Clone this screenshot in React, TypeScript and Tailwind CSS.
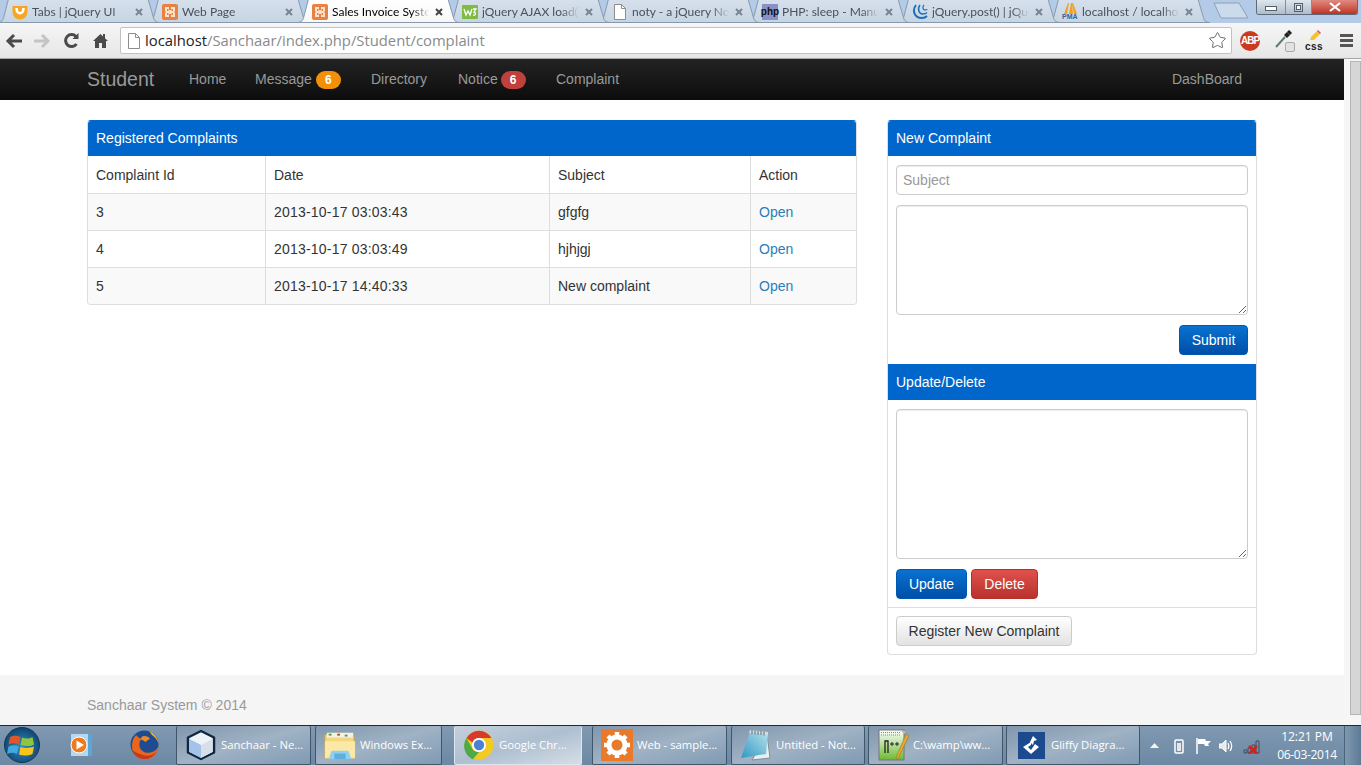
import React from "react";
import { Star } from "lucide-react";

const Xampp = () => (
  <svg width="16" height="16" viewBox="0 0 16 16">
    <rect width="16" height="16" rx="2" fill="#e98240" />
    <path d="M3 3h4v3h2V3h4v4l-1 1 1 1v4H9v-3H7v3H3V9l1-1-1-1z" fill="#fbe3cf" />
    <path d="M5 5h1.500v2H5zM9.500 5H11v2H9.500zM5 9h1.500v2H5zM9.500 9H11v2H9.500z" fill="#e98240" />
  </svg>
);
const Smile = () => (
  <svg width="16" height="16" viewBox="0 0 16 16">
    <path d="M.5 2h15v6a7.500 7.500 0 0 1-15 0z" fill="#f5a623" />
    <path d="M4.500 4c0 7 7 7 7 0" fill="none" stroke="#fff" strokeWidth="2.600" />
  </svg>
);
const W3 = () => (
  <svg width="16" height="14" viewBox="0 0 16 14">
    <rect width="16" height="14" rx="1" fill="#7dbb42" />
    <path d="M2 4l2 6 2-4 2 4 2-6M11 4h3l-2 3c2 0 2 4-1 3" fill="none" stroke="#fff" strokeWidth="1.300" />
  </svg>
);
const Doc = () => (
  <svg width="12" height="16" viewBox="0 0 12 16">
    <path d="M.5.5h7l4 4v11H.5z" fill="#fff" stroke="#8d8d8d" />
    <path d="M7.500.5v4h4" fill="none" stroke="#8d8d8d" />
  </svg>
);
const Php = () => (
  <span className="flex h-[16px] w-[16px] items-center justify-center bg-[#8990c4] text-[10px] leading-none font-bold text-[#111] font-['Liberation_Sans',sans-serif]">php</span>
);
const JQ = () => (
  <svg width="16" height="16" viewBox="0 0 16 16" fill="none" stroke="#1f6fb8">
    <path d="M4 1C0 6 2 14 10 14c2 0 4-1 5-2" strokeWidth="2" />
    <path d="M8 1C5 5 7 10 11 10c1.500 0 3-.5 4-1.500" strokeWidth="1.500" />
    <path d="M12 1c-2 2-1 5 1 5 1 0 2-.5 2-1" strokeWidth="1.200" />
  </svg>
);
const Pma = () => (
  <span className="relative block h-[17px] w-[16px]">
    <svg width="16" height="11" viewBox="0 0 16 11" className="absolute top-0 left-0">
      <path d="M2 11L6 0h1L5 11zM7 11l2-11h1l1 11zM12 11L10 0h1l4 11z" fill="#f2a01e" />
    </svg>
    <span className="absolute bottom-0 left-0 text-[7px] leading-none font-bold text-[#3a5e9a] font-['Liberation_Sans',sans-serif]">PMA</span>
  </span>
);

const tabs: { t: string; icon: React.ReactNode; active?: boolean; z: string }[] = [
  { t: "Tabs | jQuery UI", icon: <Smile />, z: "z-[8]" },
  { t: "Web Page", icon: <Xampp />, z: "z-[7]" },
  { t: "Sales Invoice System", icon: <Xampp />, active: true, z: "z-[9]" },
  { t: "jQuery AJAX load() Method", icon: <W3 />, z: "z-[6]" },
  { t: "noty - a jQuery Notification", icon: <Doc />, z: "z-[5]" },
  { t: "PHP: sleep - Manual", icon: <Php />, z: "z-[4]" },
  { t: "jQuery.post() | jQuery API", icon: <JQ />, z: "z-[3]" },
  { t: "localhost / localhost", icon: <Pma />, z: "z-[2]" },
];

function Tab({ t, icon, active, z }: { t: string; icon: React.ReactNode; active?: boolean; z: string }) {
  return (
    <div className={`relative -mr-[8px] flex h-[23px] w-[158px] shrink-0 items-center pl-[12px] ${z} ${active ? "text-black" : "text-[#4a5058]"}`}>
      <svg width="158" height="23" viewBox="0 0 158 23" className="absolute top-0 left-0 overflow-visible">
        <defs>
          <linearGradient id={active ? "tabA" : "tabI"} x1="0" y1="0" x2="0" y2="1">
            <stop offset="0" stopColor={active ? "#ffffff" : "#d6e0ec"} />
            <stop offset="1" stopColor={active ? "#f7f7f7" : "#c7d4e3"} />
          </linearGradient>
        </defs>
        <path
          d="M-3 22.500C2 22.500 3 20 4 16L8.500 -1H148L153 16C154 20 155 22.500 160 22.500Z"
          fill={`url(#${active ? "tabA" : "tabI"})`}
          stroke="#8698ad"
          strokeWidth="1"
        />
      </svg>
      <span className="relative flex w-[16px] shrink-0 justify-center">{icon}</span>
      <span className="relative ml-[4px] w-[97px] overflow-hidden text-[12px] leading-[20px] whitespace-nowrap font-['Lato',sans-serif] [mask-image:linear-gradient(to_right,black_82%,transparent)]">{t}</span>
      <svg width="8" height="8" viewBox="0 0 8 8" className="relative ml-[6px]" stroke={active ? "#444" : "#7a8490"} strokeWidth="2">
        <path d="M1 1l6 6M7 1L1 7" />
      </svg>
    </div>
  );
}

function Tabs() {
  return (
    <div className="flex h-[23px] items-start bg-[#b3cbe6]">
      {tabs.map((x) => (
        <Tab key={x.t} {...x} />
      ))}
      <svg width="36" height="17" viewBox="0 0 36 17" className="mt-[2px] ml-[13px]">
        <path d="M1 1H26L35 16H8Z" fill="#cbdbec" stroke="#8ea0b8" />
      </svg>
      <div className="mt-0 ml-auto mr-[3px] flex h-[15px] w-[102px] overflow-hidden rounded-b-[3px] border border-t-0 border-[#5c6b7c]">
        <div className="flex w-[28px] items-center justify-center bg-gradient-to-b from-[#dfe6ee] to-[#aebccb]">
          <span className="mt-[2px] h-[5px] w-[12px] border border-[#55606c] bg-white" />
        </div>
        <div className="flex w-[26px] items-center justify-center border-l border-[#7f8e9e] bg-gradient-to-b from-[#dfe6ee] to-[#aebccb]">
          <span className="relative h-[9px] w-[9px] border border-[#55606c]">
            <span className="absolute top-[1px] left-[1px] h-[5px] w-[5px] border border-[#55606c] bg-white" />
          </span>
        </div>
        <div className="flex flex-1 items-center justify-center border-l border-[#7f8e9e] bg-gradient-to-b from-[#df8a80] to-[#bd2f22]">
          <svg width="12" height="10" viewBox="0 0 12 10" stroke="#fff" strokeWidth="2.200">
            <path d="M1 1l10 8M11 1L1 9" />
          </svg>
        </div>
      </div>
    </div>
  );
}

function Toolbar() {
  return (
    <div className="flex h-[36px] items-center border-b border-[#a7a7a7] bg-gradient-to-b from-[#f6f6f6] to-[#e6e6e6]">
      <svg width="18" height="16" viewBox="0 0 18 16" className="ml-[5px]" fill="none" stroke="#4a4a4a" strokeWidth="3">
        <path d="M17 8H4M9 2L3 8l6 6" />
      </svg>
      <svg width="18" height="16" viewBox="0 0 18 16" className="ml-[10px]" fill="none" stroke="#c4c4c4" strokeWidth="3">
        <path d="M1 8h13M9 2l6 6-6 6" />
      </svg>
      <svg width="17" height="17" viewBox="0 0 17 17" className="ml-[12px]" fill="none" stroke="#4a4a4a" strokeWidth="3">
        <path d="M13.500 12A6 6 0 1 1 13 4.500" />
        <path d="M15.500 1v6h-6z" fill="#4a4a4a" stroke="none" />
      </svg>
      <svg width="15" height="15" viewBox="0 0 15 15" className="ml-[13px]" fill="#4a4a4a">
        <path d="M7.500 1L0 8h2v7h4v-5h3v5h4V8h2l-3-2.800V1h-2v2.400z" />
      </svg>
      <div className="ml-[12px] flex h-[27px] w-[1112px] items-center rounded-[2px] border border-[#c2c2c2] bg-white pr-[4px] pl-[7px]">
        <Doc />
        <span className="ml-[5px] text-[14.800px] leading-none text-[#8a8a8a]">
          <span className="text-[#222]">localhost</span>/Sanchaar/index.php/Student/complaint
        </span>
        <Star size={19} strokeWidth={1.200} className="ml-auto text-[#666]" />
      </div>
      <span className="ml-[8px] flex h-[20px] w-[20px] items-center justify-center rounded-full bg-[#c93a21] text-[10px] font-bold tracking-[-1px] text-white font-['Liberation_Sans',sans-serif]">ABP</span>
      <span className="relative ml-[15px] block h-[22px] w-[22px]">
        <svg width="20" height="18" viewBox="0 0 20 18" className="absolute top-0 left-0">
          <path d="M1 17L10 7" stroke="#5f7f6c" strokeWidth="2" />
          <path d="M9 5l3-3 3 3-3 3z" fill="#222" />
          <path d="M13 1l3 3" stroke="#222" strokeWidth="3" />
        </svg>
        <span className="absolute right-[2px] bottom-0 h-[10px] w-[10px] rounded-[2px] border border-[#aaa] bg-[#e2e2e2]" />
      </span>
      <span className="relative ml-[6px] block h-[22px] w-[22px] text-center">
        <svg width="12" height="11" viewBox="0 0 12 11" className="absolute top-0 left-[6px]">
          <path d="M1 10l1-3 6-6 3 3-6 6z" fill="#f2c230" />
          <path d="M8 1l1-1 3 3-1 1z" fill="#d9534f" />
        </svg>
        <span className="absolute bottom-0 left-0 w-full text-[10px] leading-[11px] font-bold tracking-[0.5px] text-[#222] font-['Liberation_Sans',sans-serif]">css</span>
      </span>
      <span className="ml-[15px] flex flex-col gap-[2px]">
        <span className="h-[3px] w-[13px] bg-[#555]" />
        <span className="h-[3px] w-[13px] bg-[#555]" />
        <span className="h-[3px] w-[13px] bg-[#555]" />
      </span>
    </div>
  );
}

function Badge({ n, c, m }: { n: number; c: string; m: string }) {
  return <span className={`flex h-[18px] w-[25px] items-center justify-center rounded-[10px] text-[12px] font-bold text-white ${m} ${c}`}>{n}</span>;
}

function Navbar() {
  return (
    <div className="h-[41px] shrink-0 bg-gradient-to-b from-[#232323] to-[#0d0d0d] text-[14px] text-[#999]">
      <div className="mx-auto flex h-full w-[1170px] items-center">
        <span className="w-[102px] text-[19.500px]">Student</span>
        <span className="w-[66px]">Home</span>
        <span className="flex w-[116px] items-center">Message<Badge n={6} c="bg-[#f39008]" m="ml-[4px]" /></span>
        <span className="w-[87px]">Directory</span>
        <span className="flex w-[98px] items-center">Notice<Badge n={6} c="bg-[#c0403c]" m="ml-[3px]" /></span>
        <span>Complaint</span>
        <span className="mr-[15px] ml-auto">DashBoard</span>
      </div>
    </div>
  );
}

const rows = [
  ["3", "2013-10-17 03:03:43", "gfgfg"],
  ["4", "2013-10-17 03:03:49", "hjhjgj"],
  ["5", "2013-10-17 14:40:33", "New complaint"],
];

function LeftPanel() {
  return (
    <div className="w-[770px] self-start overflow-hidden rounded-[4px] border border-[#dddddd] border-t-[#0066cc] bg-white">
      <div className="flex h-[35px] items-center bg-[#0066cc] px-[8px] text-white">Registered Complaints</div>
      <table className="w-full table-fixed">
        <colgroup>
          <col className="w-[177px]" />
          <col className="w-[284px]" />
          <col className="w-[201px]" />
          <col className="w-[106px]" />
        </colgroup>
        <tbody>
          <tr className="h-[37px]">
            {["Complaint Id", "Date", "Subject", "Action"].map((h, i) => (
              <td key={h} className={`pt-[2px] pr-[8px] ${i === 0 ? "pl-[8px]" : "pl-[8.500px]"} ${i < 3 ? "border-r border-[#dddddd]" : ""}`}>{h}</td>
            ))}
          </tr>
          {rows.map((r, k) => (
            <tr key={r[0]} className={`h-[37px] border-t border-[#dddddd] ${k % 2 === 0 ? "bg-[#f9f9f9]" : "bg-white"}`}>
              <td className="border-r border-[#dddddd] px-[8px] pt-[2px]">{r[0]}</td>
              <td className="border-r border-[#dddddd] pt-[2px] pr-[8px] pl-[8.500px] tracking-[0.2px]">{r[1]}</td>
              <td className="border-r border-[#dddddd] pt-[2px] pr-[8px] pl-[8.500px]">{r[2]}</td>
              <td className="pt-[2px] pr-[8px] pl-[8.500px] text-[#2a7eb8]">Open</td>
            </tr>
          ))}
        </tbody>
      </table>
    </div>
  );
}

const fieldCls = "block w-full rounded-[4px] border border-[#cccccc] bg-white px-[6px] text-[14px] shadow-[inset_0_1px_1px_rgba(0,0,0,0.075)] outline-none";
const btnCls = "flex h-[30px] items-center justify-center rounded-[4px] border text-[14px]";

function RightPanel() {
  return (
    <div className="w-[370px] self-start rounded-[4px] border border-[#dddddd] border-t-[#0066cc] bg-white">
      <div className="flex h-[35px] items-center rounded-t-[3px] bg-[#0066cc] px-[8px] text-white">New Complaint</div>
      <div className="flex flex-col gap-[10px] px-[8px] pt-[9px] pb-[9px]">
        <input placeholder="Subject" readOnly className={`${fieldCls} h-[30px] placeholder:text-[#999]`} />
        <textarea readOnly className={`${fieldCls} h-[110px]`} />
        <div className="flex justify-end">
          <span className={`${btnCls} w-[69px] border-[#0058b0] bg-gradient-to-b from-[#0a72d0] to-[#004fa8] text-white`}>Submit</span>
        </div>
      </div>
      <div className="flex h-[36px] items-center bg-[#0066cc] px-[8px] text-white">Update/Delete</div>
      <div className="flex flex-col gap-[10px] px-[8px] pt-[9px] pb-[8px]">
        <textarea readOnly className={`${fieldCls} h-[150px]`} />
        <div className="flex gap-[4px]">
          <span className={`${btnCls} w-[71px] border-[#0058b0] bg-gradient-to-b from-[#0a72d0] to-[#004fa8] text-white`}>Update</span>
          <span className={`${btnCls} w-[67px] border-[#b92c28] bg-gradient-to-b from-[#e0514c] to-[#b8322e] text-white`}>Delete</span>
        </div>
      </div>
      <div className="border-t border-[#dddddd] p-[8px]">
        <span className={`${btnCls} w-[176px] border-[#cccccc] bg-gradient-to-b from-white to-[#e2e2e2] text-[#333]`}>Register New Complaint</span>
      </div>
    </div>
  );
}

function Scrollbar() {
  return (
    <div className="flex w-[17px] shrink-0 flex-col bg-[#f6f6f6] pt-[2px] pb-[10px] pl-[6px]">
      <div className="flex-1 border border-[#b5b5b5] bg-[#d6d6d6]" />
    </div>
  );
}

/* taskbar icons */
const Orb = () => (
  <svg width="36" height="36" viewBox="0 0 36 36">
    <defs>
      <radialGradient id="orb" cx="0.5" cy="0.55" r="0.6">
        <stop offset="0" stopColor="#2f8fc4" />
        <stop offset="1" stopColor="#0d3d68" />
      </radialGradient>
    </defs>
    <circle cx="18" cy="18" r="17.500" fill="url(#orb)" stroke="#16384f" />
    <path d="M6 10c4-2 7-1.500 10.500 0L15 17.500C11.500 16 8.500 15.800 4.500 17.500z" fill="#e2552b" />
    <path d="M18 10.500c3.500 1.500 7 1.500 10.500-.5L30 17.500c-3.500 2-6.500 1.800-13.500 .5z" fill="#8dc63f" />
    <path d="M4.500 19.500c4-1.700 7-1.500 10.200 0L13 27c-3-1.500-6-1.700-10 0z" fill="#3fa9e0" />
    <path d="M16.500 20c4 1.200 8 1.500 13.500-.5L28.500 27c-5 2-9 2-13.500.5z" fill="#f9c41c" />
  </svg>
);
const MediaIcon = () => (
  <svg width="26" height="26" viewBox="0 0 26 26">
    <rect x="18" y="2" width="6" height="22" fill="#5ba6d8" />
    <rect x="3" y="2" width="17" height="22" fill="#b6d8ef" />
    <circle cx="11" cy="13" r="8" fill="#f07a1c" stroke="#fff" />
    <path d="M8.500 8.500l7.500 4.500-7.500 4.500z" fill="#fff" />
  </svg>
);
const Firefox = () => (
  <svg width="30" height="30" viewBox="0 0 30 30">
    <circle cx="15.500" cy="14.500" r="14" fill="#1f4c90" />
    <path d="M15 6c3 0 5 1 6 3-2 1-3 1-4 3-2 0-3-3-6-2 1-2 2-4 4-4z" fill="#f08a24" />
    <path d="M7 5C0 13 2 28 15 29.500 24 30 29 23 29.500 16c-2 6-11 9-16 5-4-3-4-9-1-12-2-1-4-2-5.500-4z" fill="#e9661c" />
    <path d="M20 1c5 2 9 7 9.500 13-1-4-3.500-7-6.500-9-1-1-2-3-3-4z" fill="#f9b233" />
    <path d="M3 20c2 6 8 9.500 14 9 5-.5 9-4 11-8-3 4-9 6-14 4-4-1-8-3-11-5z" fill="#c8391c" />
  </svg>
);
const CubeIcon = () => (
  <svg width="32" height="32" viewBox="0 0 32 32" strokeLinejoin="round">
    <path d="M16 2L29 8.500v15L16 30 3 23.500v-15z" fill="#eef3f8" stroke="#12263f" strokeWidth="2.500" />
    <path d="M4.500 10L16 16v13L4.500 23z" fill="#a4c3ea" />
    <path d="M27.500 10L16 16v13l11.500-6z" fill="#d7dfe8" />
  </svg>
);
const Folder = () => (
  <svg width="34" height="32" viewBox="0 0 34 32">
    <path d="M1 5h12l2 2h17v23H1z" fill="#f1d77f" stroke="#c9a94f" />
    <path d="M3 3h28v5H3z" fill="#f8f3d8" />
    <rect x="5" y="4" width="3" height="2" fill="#3fa04a" />
    <rect x="14" y="4" width="3" height="2" fill="#c7402e" />
    <rect x="22" y="5" width="3" height="2" fill="#3f8fc7" />
    <path d="M1 12h32v18H1z" fill="#fbe8a6" />
    <path d="M8 22h18l3 9H5z" fill="#8fd0f0" />
    <path d="M11 25h12v6H11z" fill="#5bb0e0" />
  </svg>
);
const Chrome = () => (
  <svg width="30" height="30" viewBox="0 0 30 30">
    <circle cx="15" cy="15" r="14.500" fill="#f3c924" />
    <path d="M2.500 8A14.500 14.500 0 0 1 27.500 8H15a7 7 0 0 0-6.500 4.500z" fill="#d9382c" />
    <path d="M2.500 8L9 20a7 7 0 0 0 6 2l-6 7.300A14.500 14.500 0 0 1 2.500 8z" fill="#4fa945" />
    <circle cx="15" cy="15" r="7" fill="#fff" />
    <circle cx="15" cy="15" r="5.200" fill="#4a80d6" />
  </svg>
);
const Gear = () => (
  <span className="flex h-[32px] w-[32px] items-center justify-center bg-[#e87a2a]">
    <svg width="28" height="28" viewBox="0 0 28 28">
      <circle cx="14" cy="14" r="8" fill="none" stroke="#fff" strokeWidth="5" />
      <path d="M14 1v26M1 14h26M5 5l18 18M23 5L5 23" stroke="#fff" strokeWidth="4.500" strokeDasharray="5 16" />
    </svg>
  </span>
);
const Notepad = () => (
  <svg width="32" height="32" viewBox="0 0 32 32">
    <defs>
      <linearGradient id="npd" x1="0" y1="1" x2="1" y2="0">
        <stop offset="0" stopColor="#2f97c6" />
        <stop offset="1" stopColor="#b8e2ea" />
      </linearGradient>
    </defs>
    <path d="M27 5l3 24-18 2 13-22z" fill="#e9eef0" stroke="#7f8d94" />
    <path d="M10 3l18 2-2 20-25 4z" fill="url(#npd)" />
    <path d="M10 1l18 2v3L9 4z" fill="#cfdde2" />
    <path d="M12 1v4M15 1.500v4M18 2v4M21 2v4M24 2.500v4" stroke="#5f6e75" strokeWidth="1" />
  </svg>
);
const Npp = () => (
  <svg width="32" height="32" viewBox="0 0 32 32">
    <defs>
      <linearGradient id="npg" x1="0" y1="0" x2="0" y2="1">
        <stop offset="0" stopColor="#ffffff" />
        <stop offset="1" stopColor="#6cb92e" />
      </linearGradient>
    </defs>
    <rect x="2" y="1" width="25" height="30" fill="url(#npg)" stroke="#777" />
    <path d="M4 3.500h19M4 6h19" stroke="#888" strokeDasharray="1 1" />
    <path d="M8 24V12h3v12" fill="none" stroke="#222" strokeWidth="1.300" />
    <path d="M13 15h4M15 13v4M18 15h4M20 13v4" stroke="#222" />
    <path d="M19 29L29 5l3 1.500-11 23.500z" fill="#e8a92f" stroke="#8a6a1f" strokeWidth=".5" />
    <path d="M24 2h5l-2 3z" fill="#bbb" />
  </svg>
);
const Gliffy = () => (
  <svg width="27" height="27" viewBox="0 0 27 27">
    <rect width="27" height="27" fill="#1c4a8f" />
    <path d="M13 10L5 15l8 7 8-7-4-3-4 6-3-3 3-2z" fill="#fff" />
    <path d="M12 10l3-6 4 4-3 1-1 4z" fill="#fff" />
  </svg>
);

const tasks: { t: string; w: string; icon: React.ReactNode; active?: boolean; after: string }[] = [
  { t: "Sanchaar - Ne...", w: "w-[135px]", icon: <CubeIcon />, after: "mr-[4px]" },
  { t: "Windows Ex...", w: "w-[127px]", icon: <Folder />, after: "mr-[12px]" },
  { t: "Google Chr...", w: "w-[128px]", icon: <Chrome />, active: true, after: "mr-[10px]" },
  { t: "Web - sample...", w: "w-[135px]", icon: <Gear />, after: "mr-[4px]" },
  { t: "Untitled - Not...", w: "w-[134px]", icon: <Notepad />, after: "mr-[3px]" },
  { t: "C:\\wamp\\ww...", w: "w-[135px]", icon: <Npp />, after: "mr-[3px]" },
  { t: "Gliffy Diagra...", w: "w-[134px]", icon: <Gliffy />, after: "" },
];

function Taskbar() {
  return (
    <div className="flex h-[40px] shrink-0 border-t border-[#1d2b38] bg-gradient-to-b from-[#8199b1] to-[#6c88a3] text-[11.300px] text-white">
      <span className="mt-[1px] ml-[4px] w-[36px]"><Orb /></span>
      <span className="mt-[6px] ml-[28px] w-[26px]"><MediaIcon /></span>
      <span className="mt-[4px] ml-[35px] w-[30px]"><Firefox /></span>
      <div className="ml-[17px] flex">
        {tasks.map((x) => (
          <div
            key={x.t}
            className={`flex h-full shrink-0 items-center gap-[4px] overflow-hidden rounded-[2px] border border-t-0 pl-[8px] whitespace-nowrap ${x.w} ${x.after} ${
              x.active
                ? "border-[#dfe6ee] bg-gradient-to-br from-[#c4cfdb] via-[#aebfd0] to-[#d5dee7]"
                : "border-[#42566a] bg-gradient-to-br from-[#8197ae] via-[#a0b2c4] to-[#7f9ab3]"
            }`}
          >
            <span className="flex w-[32px] shrink-0 justify-center">{x.icon}</span>
            <span>{x.t}</span>
          </div>
        ))}
      </div>
      <div className="flex flex-1 items-center">
        <svg width="9" height="5" viewBox="0 0 9 5" className="ml-[10px]"><path d="M0 5l4.500-5L9 5z" fill="#f2f2f2" /></svg>
        <svg width="10" height="16" viewBox="0 0 10 16" className="ml-[15px]" fill="none" stroke="#fff" strokeWidth="1.500"><rect x="1" y="2" width="8" height="13" rx="1" /><rect x="3" y="5" width="4" height="8" fill="#e6e6e6" stroke="none" /></svg>
        <svg width="16" height="16" viewBox="0 0 16 16" className="ml-[12px]"><path d="M1 0v16" stroke="#fff" strokeWidth="1.500" /><path d="M2 1h7l1 2h5l-3 3 1 2H9L8 6H2z" fill="#fff" /></svg>
        <svg width="15" height="14" viewBox="0 0 15 14" className="ml-[7px]" fill="none" stroke="#fff"><path d="M0 5h3l4-4v12L3 9H0z" fill="#e8e8e8" stroke="#fff" /><path d="M9 4c1 2 1 4 0 6M11 2c2 3 2 7 0 10" strokeWidth="1.300" /></svg>
        <svg width="17" height="16" viewBox="0 0 17 16" className="ml-[9px]"><path d="M1 12h3v3H1zM5 10h3v5H5zM9 7h3v8H9zM13 3h3v12h-3z" fill="none" stroke="#3f4e5c" /><path d="M6 8l8 8M14 8l-8 8" stroke="#d81f1f" strokeWidth="2.500" /></svg>
        <div className="mr-[0px] ml-auto flex w-[74px] flex-col items-center text-[12px] leading-[18px] whitespace-nowrap">
          <span>12:21 PM</span>
          <span className="tracking-[-0.3px]">06-03-2014</span>
        </div>
      </div>
      <div className="w-[17px] border-l border-[#4d6377] bg-gradient-to-r from-[#7f99b2] to-[#5d7a95]" />
    </div>
  );
}

export default function App() {
  return (
    <div className="flex h-[765px] w-full flex-col overflow-hidden bg-white font-['Open_Sans',sans-serif]">
      <Tabs />
      <Toolbar />
      <div className="flex min-h-0 flex-1">
        <div className="flex min-w-0 flex-1 flex-col text-[14px] text-[#333] font-['Liberation_Sans',sans-serif]">
          <Navbar />
          <div className="flex-1">
            <div className="mx-auto mt-[20px] flex w-[1170px] gap-[30px]">
              <LeftPanel />
              <RightPanel />
            </div>
          </div>
          <div className="h-[50px] bg-[#f5f5f5]">
            <div className="mx-auto w-[1170px] pt-[20px] text-[#999]">Sanchaar System © 2014</div>
          </div>
        </div>
        <Scrollbar />
      </div>
      <Taskbar />
    </div>
  );
}
